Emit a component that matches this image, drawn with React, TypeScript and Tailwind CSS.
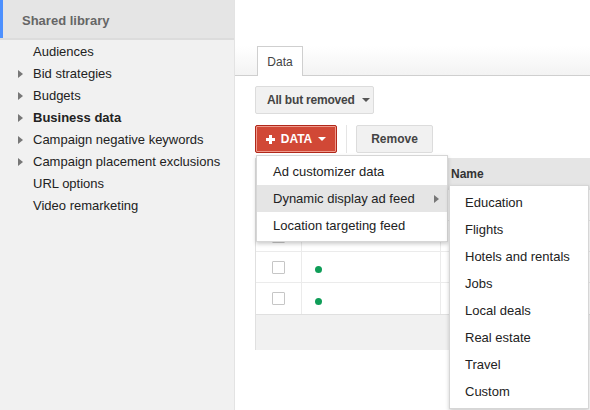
import React from "react"

const sidebarItems = [
  { label: "Audiences", arrow: false },
  { label: "Bid strategies", arrow: true },
  { label: "Budgets", arrow: true },
  { label: "Business data", arrow: true, bold: true },
  { label: "Campaign negative keywords", arrow: true },
  { label: "Campaign placement exclusions", arrow: true },
  { label: "URL options", arrow: false },
  { label: "Video remarketing", arrow: false },
]

const feedTypes = ["Education", "Flights", "Hotels and rentals", "Jobs", "Local deals", "Real estate", "Travel", "Custom"]

function RightTri({ className = "" }: { className?: string }) {
  return (
    <svg width="5" height="8" viewBox="0 0 5 8" className={className}>
      <path d="M0 0 L5 4 L0 8 Z" fill="#777" />
    </svg>
  )
}

function Caret({ color = "#555" }: { color?: string }) {
  return (
    <svg width="8" height="4" viewBox="0 0 8 4" className="shrink-0">
      <path d="M0 0 L8 0 L4 4 Z" fill={color} />
    </svg>
  )
}

function Sidebar() {
  return (
    <aside className="w-[235px] shrink-0 bg-[#f1f1f1] border-r border-[#e3e3e3] h-full">
      <div className="h-[38px] bg-[#e5e5e5] border-l-[3px] border-[#4d90fe] flex items-center pl-[19px] pt-[3px] text-[13px] font-bold text-[#666]">
        Shared library
      </div>
      <div className="h-[2px] bg-[#dcdcdc]" />
      <ul className="pt-[1px]">
        {sidebarItems.map((it) => (
          <li key={it.label} className="h-[22px] flex items-center text-[13px] text-[#222]">
            <span className="w-[33px] flex justify-end pr-[10px]">{it.arrow ? <RightTri /> : null}</span>
            <span className={it.bold ? "font-bold" : ""}>{it.label}</span>
          </li>
        ))}
      </ul>
    </aside>
  )
}

function TableRow({ last }: { last?: boolean }) {
  return (
    <div className={`flex h-[31px] ${last ? "" : "border-b border-[#ebebeb]"}`}>
      <div className="w-[46px] border-r border-[#ebebeb] flex items-center justify-center">
        <div className="w-[13px] h-[13px] border border-[#c6c6c6] bg-white rounded-[1px]" />
      </div>
      <div className="w-[139px] border-r border-[#ebebeb] flex items-center pl-[13px] pt-[5px]">
        <div className="w-[7px] h-[7px] rounded-full bg-[#0f9d58]" />
      </div>
      <div className="flex-1" />
    </div>
  )
}

export default function App() {
  return (
    <div className="w-[590px] h-[410px] flex overflow-hidden bg-white font-['Liberation_Sans',Arial,sans-serif]">
      <Sidebar />
      <main className="relative flex-1 flex flex-col">
        <div className="h-[46px]" />
        <div className="h-[30px] bg-gradient-to-b from-white to-[#f3f3f3] border-b border-[#cfcfcf] flex items-end pl-[22px]">
          <div className="w-[46px] h-[30px] -mb-px bg-white border border-b-0 border-[#cfcfcf] flex items-center justify-center text-[12px] text-[#444]">
            Data
          </div>
        </div>

        <div className="pl-[20px] pt-[10px]">
          <button className="h-[28px] w-[119px] bg-[#f1f1f1] border border-[#dcdcdc] rounded-[2px] flex items-center pl-[11px] gap-[7px] whitespace-nowrap tracking-[-0.2px] text-[12px] font-bold text-[#444]">
            All but removed
            <Caret />
          </button>
        </div>

        <div className="pl-[20px] pt-[11px] flex items-center">
          <button className="h-[28px] w-[82px] bg-[#d14836] border border-[#b0281a] shadow-[inset_0_0_0_1px_#ee9a8c] rounded-[2px] flex items-center justify-center gap-[6px] text-[12px] font-bold text-white">
            <svg width="9" height="9" viewBox="0 0 9 9">
              <path d="M3 0 H6 V3 H9 V6 H6 V9 H3 V6 H0 V3 H3 Z" fill="#fff" />
            </svg>
            DATA
            <Caret color="#fff" />
          </button>
          <div className="w-px h-[28px] bg-[#e5e5e5] mx-[9px]" />
          <button className="h-[28px] w-[77px] bg-[#f1f1f1] border border-[#dcdcdc] rounded-[2px] text-[12px] font-bold text-[#444]">
            Remove
          </button>
        </div>

        <div className="ml-[20px] mt-[5px] border-l border-[#e0e0e0]">
          <div className="h-[32px] bg-[#e5e5e5] flex items-center text-[12px] font-bold text-[#333]">
            <div className="w-[195px]" />
            Name
          </div>
          <TableRow />
          <TableRow />
          <TableRow />
          <TableRow last />
          <div className="h-[36px] bg-[#f1f1f1] border-t border-[#e0e0e0]" />
        </div>

        <div className="absolute left-[21px] top-[155px] w-[192px] bg-white border border-[#d6d6d6] shadow-[0_2px_4px_rgba(0,0,0,0.2)] py-[2px] text-[13px] text-[#222]">
          <div className="h-[27px] flex items-center pl-[16px]">Ad customizer data</div>
          <div className="h-[27px] flex items-center pl-[16px] pr-[8px] bg-[#e5e5e5] justify-between">
            Dynamic display ad feed
            <RightTri />
          </div>
          <div className="h-[27px] flex items-center pl-[16px]">Location targeting feed</div>
        </div>

        <div className="absolute left-[214px] top-[185px] w-[140px] bg-white border border-[#d6d6d6] shadow-[0_2px_4px_rgba(0,0,0,0.2)] py-[3px] text-[13px] text-[#222]">
          {feedTypes.map((f) => (
            <div key={f} className="h-[27px] flex items-center pl-[15px]">
              {f}
            </div>
          ))}
        </div>
      </main>
    </div>
  )
}
